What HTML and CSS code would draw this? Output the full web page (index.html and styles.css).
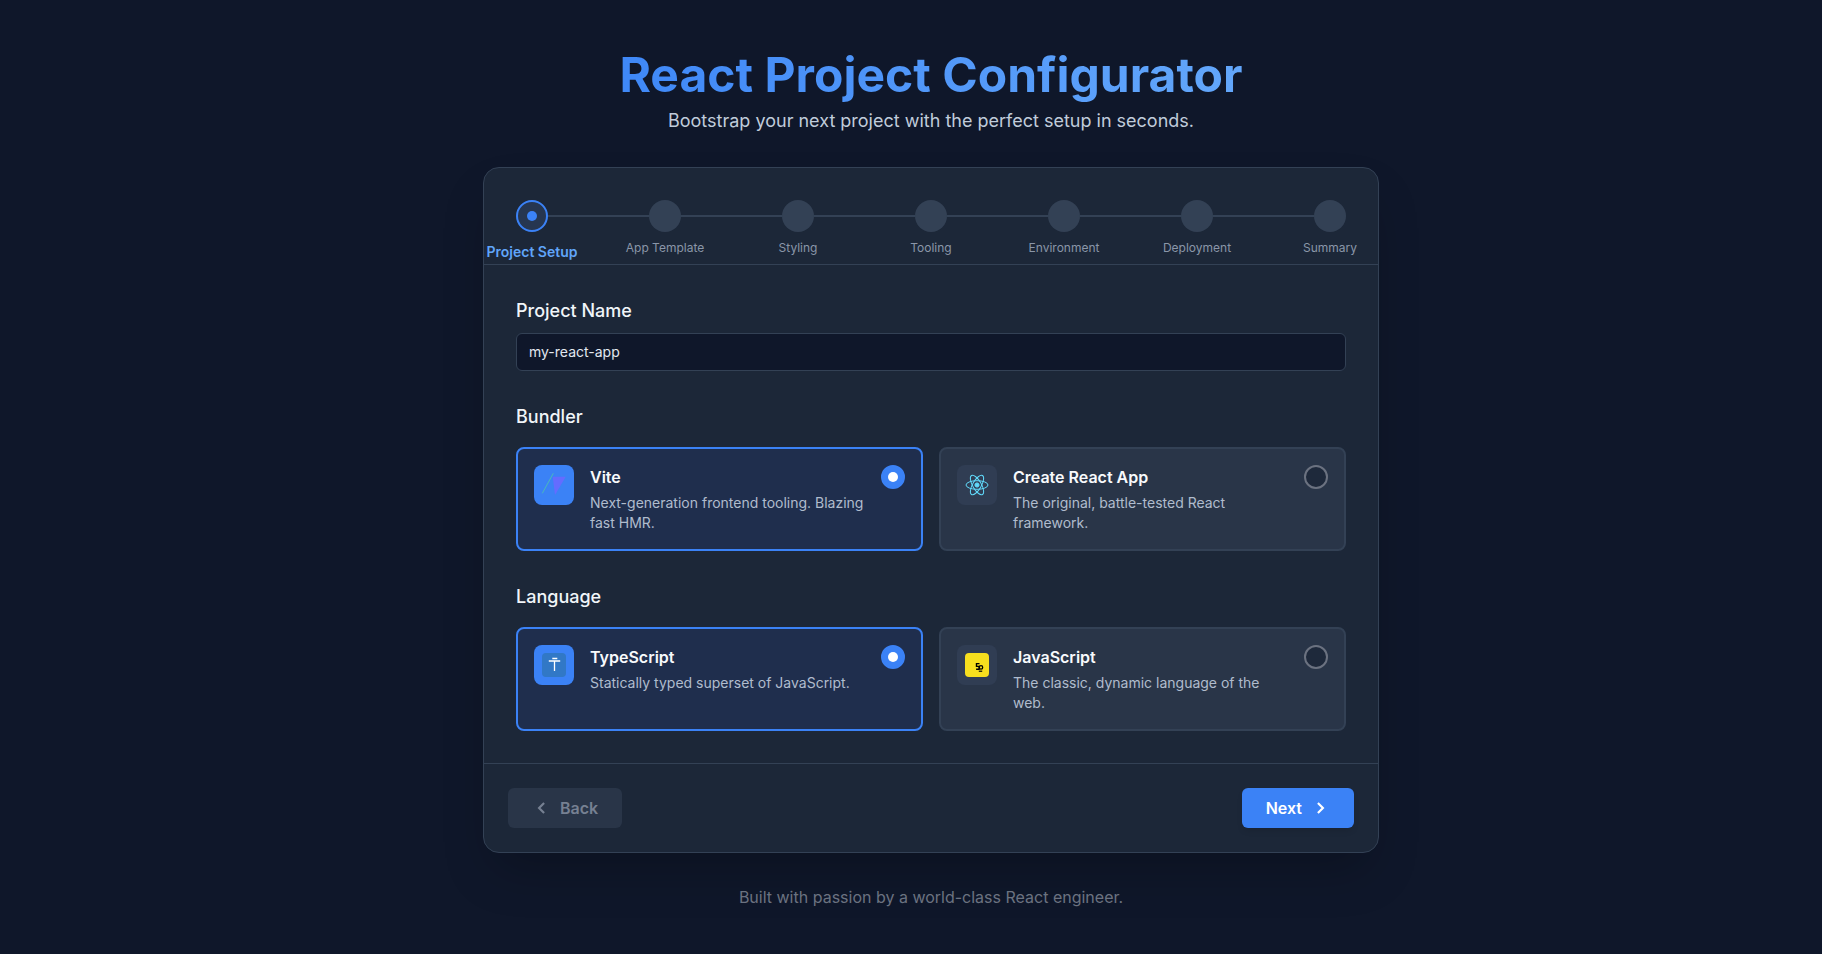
FILE: index.html
```html
<!DOCTYPE html>
<html lang="en">
<head>
<meta charset="utf-8">
<title>React Project Configurator</title>
<link rel="stylesheet" href="styles.css">
</head>
<body>
<main class="page">
  <header class="head">
    <h1 class="title">React Project Configurator</h1>
    <p class="subtitle">Bootstrap your next project with the perfect setup in seconds.</p>
  </header>
  <section class="panel">
    <nav class="stepper">
      <div class="step step-active"><span class="dot"><span class="dot-core"></span></span><span class="step-label">Project Setup</span></div>
      <span class="line"></span>
      <div class="step"><span class="dot"></span><span class="step-label">App Template</span></div>
      <span class="line"></span>
      <div class="step"><span class="dot"></span><span class="step-label">Styling</span></div>
      <span class="line"></span>
      <div class="step"><span class="dot"></span><span class="step-label">Tooling</span></div>
      <span class="line"></span>
      <div class="step"><span class="dot"></span><span class="step-label">Environment</span></div>
      <span class="line"></span>
      <div class="step"><span class="dot"></span><span class="step-label">Deployment</span></div>
      <span class="line"></span>
      <div class="step"><span class="dot"></span><span class="step-label">Summary</span></div>
    </nav>
    <div class="body">
      <div class="field">
        <label class="field-label" for="name">Project Name</label>
        <input class="input" id="name" type="text" value="my-react-app">
      </div>
      <div class="field">
        <div class="field-label spaced">Bundler</div>
        <div class="options">
          <div class="option selected">
            <span class="icon icon-blue">
              <svg width="40" height="40" viewBox="0 0 40 40"><path d="M19.3 8.3 8.3 28.3" stroke="#4fd0a0" stroke-width="0.7" fill="none"/><path d="M18.7 11.7H31.7L21 30Z" fill="#646cff"/></svg>
            </span>
            <div class="option-text">
              <div class="option-title">Vite</div>
              <div class="option-desc">Next-generation frontend tooling. Blazing fast HMR.</div>
            </div>
            <span class="radio"></span>
          </div>
          <div class="option">
            <span class="icon">
              <svg width="24" height="24" viewBox="0 0 24 24" fill="none" stroke="#61dafb" stroke-width="1"><circle cx="12" cy="12" r="2.1" fill="#61dafb"/><ellipse cx="12" cy="12" rx="11" ry="4.3"/><ellipse cx="12" cy="12" rx="11" ry="4.3" transform="rotate(60 12 12)"/><ellipse cx="12" cy="12" rx="11" ry="4.3" transform="rotate(120 12 12)"/></svg>
            </span>
            <div class="option-text">
              <div class="option-title">Create React App</div>
              <div class="option-desc">The original, battle-tested React framework.</div>
            </div>
            <span class="radio"></span>
          </div>
        </div>
      </div>
      <div class="field">
        <div class="field-label spaced">Language</div>
        <div class="options">
          <div class="option selected">
            <span class="icon icon-blue">
              <svg width="24" height="24" viewBox="0 0 24 24"><rect width="24" height="24" rx="4" fill="#3178c6"/><path d="M10.3 5.5h5M6.8 8h11.4M12.5 8v10" stroke="#fff" stroke-width="1.3" fill="none"/></svg>
            </span>
            <div class="option-text">
              <div class="option-title">TypeScript</div>
              <div class="option-desc">Statically typed superset of JavaScript.</div>
            </div>
            <span class="radio"></span>
          </div>
          <div class="option">
            <span class="icon">
              <svg width="24" height="24" viewBox="0 0 24 24"><rect width="24" height="24" rx="4" fill="#f7df1e"/><path d="M14.5 10.6h-3v2.8h2.6v2.8h-3" stroke="#000" stroke-width="1.4" fill="none"/><circle cx="16" cy="14.4" r="1.7" stroke="#000" stroke-width="1.3" fill="none"/><path d="M13.8 18.2h3.4" stroke="#000" stroke-width="1.2" fill="none"/></svg>
            </span>
            <div class="option-text">
              <div class="option-title">JavaScript</div>
              <div class="option-desc">The classic, dynamic language of the web.</div>
            </div>
            <span class="radio"></span>
          </div>
        </div>
      </div>
    </div>
    <footer class="actions">
      <button class="btn btn-back" type="button">
        <svg width="20" height="20" viewBox="0 0 24 24" fill="none" stroke="currentColor" stroke-width="2.6"><path d="M14.5 18l-6-6 6-6"/></svg>
        <span>Back</span>
      </button>
      <button class="btn btn-next" type="button">
        <span>Next</span>
        <svg width="20" height="20" viewBox="0 0 24 24" fill="none" stroke="currentColor" stroke-width="2.6"><path d="M9.5 6l6 6-6 6"/></svg>
      </button>
    </footer>
  </section>
  <p class="credit">Built with passion by a world-class React engineer.</p>
</main>
</body>
</html>
```
FILE: styles.css
```css
* { box-sizing: border-box; }
html, body { margin: 0; padding: 0; }
body {
  background: #0f172a;
  color: #e2e8f0;
  font-family: "Inter", "Liberation Sans", sans-serif;
}
.page {
  min-height: 954px;
  padding: 48px 0 0 40px;
  display: flex;
  flex-direction: column;
  align-items: center;
}
.head { text-align: center; margin-bottom: 32px; }
.title {
  margin: 0 0 5px;
  font-size: 48px;
  line-height: 54px;
  font-weight: 700;
  background: linear-gradient(90deg, #3f88f7, #63a7fb);
  -webkit-background-clip: text;
  background-clip: text;
  color: transparent;
}
.subtitle { margin: 0; font-size: 18px; line-height: 28px; color: #c0ccdb; }
.panel {
  width: 896px;
  background: #1c2738;
  border: 1px solid #334155;
  border-radius: 16px;
  box-shadow: 0 25px 50px -12px rgba(0,0,0,.25);
}
.stepper {
  display: flex;
  align-items: flex-start;
  padding: 32px 32px 2px;
  border-bottom: 1px solid #334155;
}
.step { width: 32px; display: flex; flex-direction: column; align-items: center; flex: none; }
.dot {
  width: 32px; height: 32px; border-radius: 50%;
  background: #334155;
  display: flex; align-items: center; justify-content: center;
}
.step-label {
  margin-top: 8px;
  font-size: 12px; line-height: 16px;
  color: #8a96a8;
  white-space: nowrap;
}
.line { flex: 1; height: 2px; margin-top: 15px; background: #334155; }
.step-active .dot { background: #263650; border: 2px solid #3b82f6; }
.dot-core { width: 10px; height: 10px; border-radius: 50%; background: #3b82f6; }
.step-active .step-label {
  margin-top: 10px;
  font-size: 14px; line-height: 20px; font-weight: 600;
  color: #60a5fa;
}
.body { padding: 32px; display: flex; flex-direction: column; gap: 32px; border-bottom: 1px solid #334155; }
.field-label { display: block; font-size: 18px; line-height: 28px; font-weight: 500; color: #f1f5f9; margin-bottom: 8px; }
.field-label.spaced { margin-bottom: 16px; }
.input {
  display: block; width: 100%; height: 38px;
  padding: 0 12px 2px;
  background: #0f172a;
  border: 1px solid #334155;
  border-radius: 6px;
  color: #e2e8f0;
  font: 400 14px/20px "Inter", sans-serif;
  outline: none;
}
.options { display: grid; grid-template-columns: 1fr 1fr; gap: 16px; }
.option {
  display: flex; align-items: flex-start; gap: 16px;
  padding: 16px;
  height: 104px;
  background: #293548;
  border: 2px solid #334155;
  border-radius: 8px;
}
.option.selected { background: #1f2e4d; border-color: #3b82f6; }
.icon {
  flex: none; width: 40px; height: 40px; border-radius: 8px;
  display: flex; align-items: center; justify-content: center;
  background: #303d53;
}
.icon-blue { background: #3b82f6; }
.option-text { flex: 1; min-width: 0; }
.option-title { font-size: 16px; line-height: 24px; font-weight: 600; color: #f8fafc; }
.option-desc { margin-top: 4px; font-size: 14px; line-height: 20px; color: #b0bccd; }
.radio {
  flex: none; width: 24px; height: 24px; border-radius: 50%;
  background: #1e293b;
  border: 2px solid #6b7280;
}
.selected .radio {
  background: #3b82f6; border-color: #3b82f6;
  display: flex; align-items: center; justify-content: center;
}
.selected .radio::after { content: ""; width: 10px; height: 10px; border-radius: 50%; background: #fff; }
.actions { display: flex; justify-content: space-between; padding: 24px; }
.btn {
  display: flex; align-items: center; gap: 8px;
  height: 40px; padding: 0 24px;
  border: 0; border-radius: 6px;
  font: 600 16px/24px "Inter", sans-serif;
}
.btn-back { background: #293548; color: #768092; }
.btn-next { background: #3b82f6; color: #fff; box-shadow: 0 4px 6px -1px rgba(0,0,0,.1); }
.credit { margin: 32px 0 0; font-size: 16px; line-height: 24px; color: #6b7280; }
```
